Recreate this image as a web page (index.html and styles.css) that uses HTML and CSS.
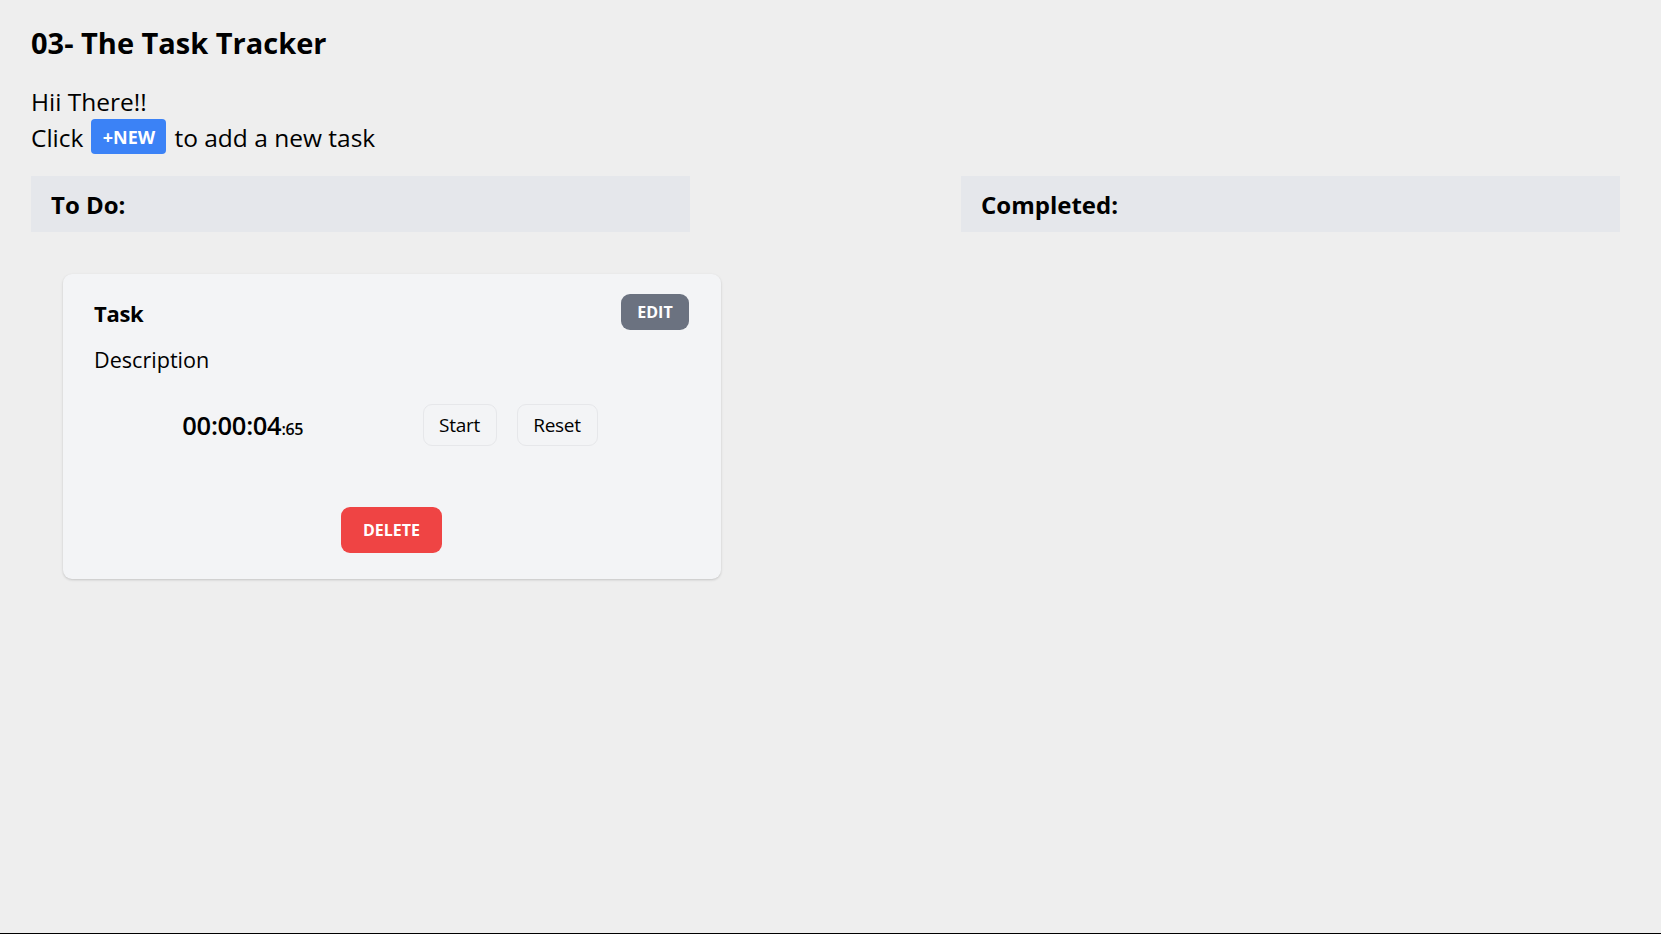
FILE: index.html
```html
<!DOCTYPE html>
<html lang="en">
<head>
<meta charset="utf-8">
<title>The Task Tracker</title>
<link rel="stylesheet" href="styles.css">
</head>
<body>
<div class="page">
  <h1 class="title">03- The Task Tracker</h1>
  <div class="intro">
    <p class="intro-line">Hii There!!</p>
    <p class="intro-line intro-cta"><span>Click</span><button class="btn-new">+NEW</button><span>to add a new task</span></p>
  </div>
  <div class="board">
    <section class="column">
      <div class="column-head">To Do:</div>
      <div class="card">
        <div class="card-head">
          <h2 class="card-title">Task</h2>
          <button class="btn-edit">EDIT</button>
        </div>
        <p class="card-desc">Description</p>
        <div class="timer-row">
          <div class="timer-cell">
            <span class="timer">00:00:04<span class="timer-ms">:65</span></span>
          </div>
          <div class="timer-actions">
            <button class="btn-ghost btn-start">Start</button>
            <button class="btn-ghost btn-reset">Reset</button>
          </div>
        </div>
        <div class="card-foot">
          <button class="btn-delete">DELETE</button>
        </div>
      </div>
    </section>
    <section class="column">
      <div class="column-head">Completed:</div>
    </section>
  </div>
</div>
</body>
</html>
```
FILE: styles.css
```css
* { box-sizing: border-box; }
html, body { margin: 0; }
body {
  background: #eeeeee;
  color: #000;
  font-family: "Open Sans", "Noto Sans", sans-serif;
  min-height: 100vh;
  border-bottom: 1px solid #000;
}
.page {
  padding: 25px 41px 0 31px;
}
.title {
  margin: 0;
  font-size: 29px;
  line-height: 36px;
  font-weight: 700;
}
.intro {
  margin-top: 23px;
}
.intro-line {
  margin: 0;
  font-size: 24.5px;
  line-height: 36px;
}
.intro-cta {
  display: flex;
  align-items: center;
  gap: 8px;
  height: 36px;
}
.btn-new {
  width: 75px;
  height: 35px;
  margin: 0 0 3px;
  padding: 0;
  border: 0;
  border-radius: 4px;
  background: #3b82f6;
  color: #fff;
  font-family: inherit;
  font-size: 18px;
  font-weight: 700;
}
.board {
  display: flex;
  justify-content: space-between;
  margin-top: 20px;
}
.column {
  width: 659px;
}
.column-head {
  height: 56px;
  display: flex;
  align-items: center;
  padding-left: 20px;
  background: #e5e7eb;
  font-size: 24px;
  font-weight: 700;
}
.card {
  margin: 42px 0 0 32px;
  width: 658px;
  height: 305px;
  padding: 20px 32px 26px 31px;
  background: #f3f4f6;
  border-radius: 9px;
  box-shadow: 0 1px 3px rgba(0,0,0,0.12), 0 1px 2px rgba(0,0,0,0.06);
  display: flex;
  flex-direction: column;
}
.card-head {
  display: flex;
  justify-content: space-between;
  align-items: flex-start;
}
.card-title {
  margin: 4px 0 0;
  font-size: 22px;
  line-height: 30px;
  font-weight: 700;
  letter-spacing: -0.3px;
}
.btn-edit {
  width: 68px;
  height: 36px;
  padding: 0;
  border: 0;
  border-radius: 9px;
  background: #6b7280;
  color: #fff;
  font-family: inherit;
  font-size: 16px;
  font-weight: 700;
}
.card-desc {
  margin: 14px 0 0;
  font-size: 21.6px;
  line-height: 32px;
}
.timer-row {
  display: grid;
  grid-template-columns: 1fr 1fr;
  align-items: center;
  margin-top: 28px;
}
.timer-cell {
  display: flex;
  justify-content: center;
}
.timer {
  font-size: 25.5px;
  font-weight: 600;
  letter-spacing: -0.3px;
}
.timer-ms {
  font-size: 16px;
  font-weight: 600;
}
.timer-actions {
  display: flex;
  gap: 20px;
  padding-left: 31px;
}
.btn-ghost {
  height: 42px;
  padding: 0;
  border: 1px solid #e6e7ea;
  border-radius: 9px;
  background: #f3f4f6;
  color: #000;
  font-family: inherit;
  font-size: 19px;
  letter-spacing: -0.3px;
}
.btn-start { width: 74px; }
.btn-reset { width: 81px; }
.card-foot {
  margin-top: auto;
  display: flex;
  justify-content: center;
}
.btn-delete {
  width: 101px;
  height: 46px;
  padding: 0;
  border: 0;
  border-radius: 9px;
  background: #ef4444;
  color: #fff;
  font-family: inherit;
  font-size: 16px;
  font-weight: 700;
}
```
